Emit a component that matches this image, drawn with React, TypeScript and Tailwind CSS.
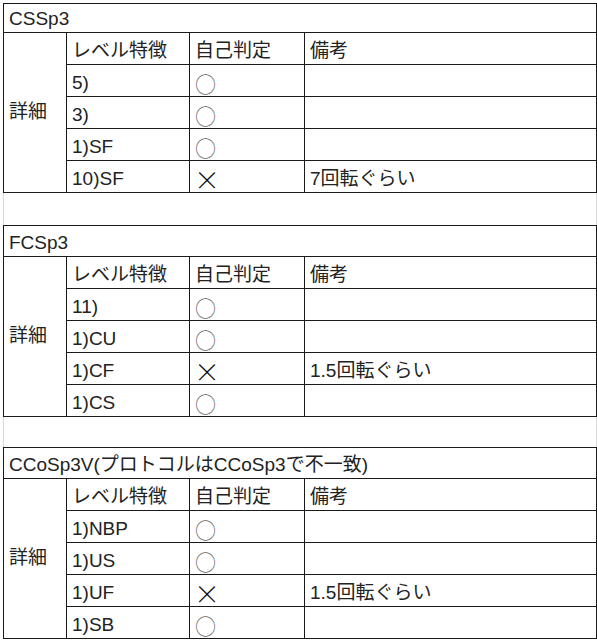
type Row = [string, "o" | "x", string];

interface Section {
  title: string;
  titleH: string;
  rows: Row[];
}

const sections: Section[] = [
  {
    title: "CSSp3",
    titleH: "h-[29px]",
    rows: [
      ["5)", "o", ""],
      ["3)", "o", ""],
      ["1)SF", "o", ""],
      ["10)SF", "x", "7回転ぐらい"],
    ],
  },
  {
    title: "FCSp3",
    titleH: "h-[31px]",
    rows: [
      ["11)", "o", ""],
      ["1)CU", "o", ""],
      ["1)CF", "x", "1.5回転ぐらい"],
      ["1)CS", "o", ""],
    ],
  },
  {
    title: "CCoSp3V(プロトコルはCCoSp3で不一致)",
    titleH: "h-[31px]",
    rows: [
      ["1)NBP", "o", ""],
      ["1)US", "o", ""],
      ["1)UF", "x", "1.5回転ぐらい"],
      ["1)SB", "o", ""],
    ],
  },
];

const cell =
  "border-r border-b border-[#1a1a1a] flex items-end px-[5px] pb-[2px] leading-[22px] whitespace-nowrap";

function Mark({ kind }: { kind: "o" | "x" }) {
  return kind === "o" ? (
    <span className="font-['Noto_Sans_CJK_JP'] font-light text-[#666] text-[21px] leading-[22px]">○</span>
  ) : (
    <span className="font-['Noto_Sans_CJK_JP'] font-light text-[#111] text-[26px] leading-[22px] -ml-[1px] [font-feature-settings:'fwid']">×</span>
  );
}

function Block({ s }: { s: Section }) {
  return (
    <div className="grid grid-cols-[63px_123px_115px_292px] border-l border-t border-[#1a1a1a]">
      <div className={`col-span-4 ${cell} ${s.titleH}`}>{s.title}</div>
      <div className="row-span-5 border-r border-b border-[#1a1a1a] flex items-center px-[5px]">
        詳細
      </div>
      <div className={`${cell} h-[32px]`}>レベル特徴</div>
      <div className={`${cell} h-[32px]`}>自己判定</div>
      <div className={`${cell} h-[32px]`}>備考</div>
      {s.rows.map((r, i) => (
        <div key={i} className="contents">
          <div className={`${cell} h-[32px]`}>{r[0]}</div>
          <div className={`${cell} h-[32px] pl-[5px]`}>
            <Mark kind={r[1]} />
          </div>
          <div className={`${cell} h-[32px]`}>{r[2]}</div>
        </div>
      ))}
    </div>
  );
}

export default function App() {
  return (
    <div className="w-[597px] h-[640px] overflow-hidden bg-white pt-[3px] pl-[3px] text-[19px] text-[#222] font-['Liberation_Sans','Noto_Sans_CJK_JP',sans-serif]">
      <Block s={sections[0]} />
      <div className="h-[32px] w-[594px] border-l border-r border-[#d9d9d9]" />
      <Block s={sections[1]} />
      <div className="h-[30px] w-[594px] border-l border-r border-[#d9d9d9]" />
      <Block s={sections[2]} />
    </div>
  );
}
